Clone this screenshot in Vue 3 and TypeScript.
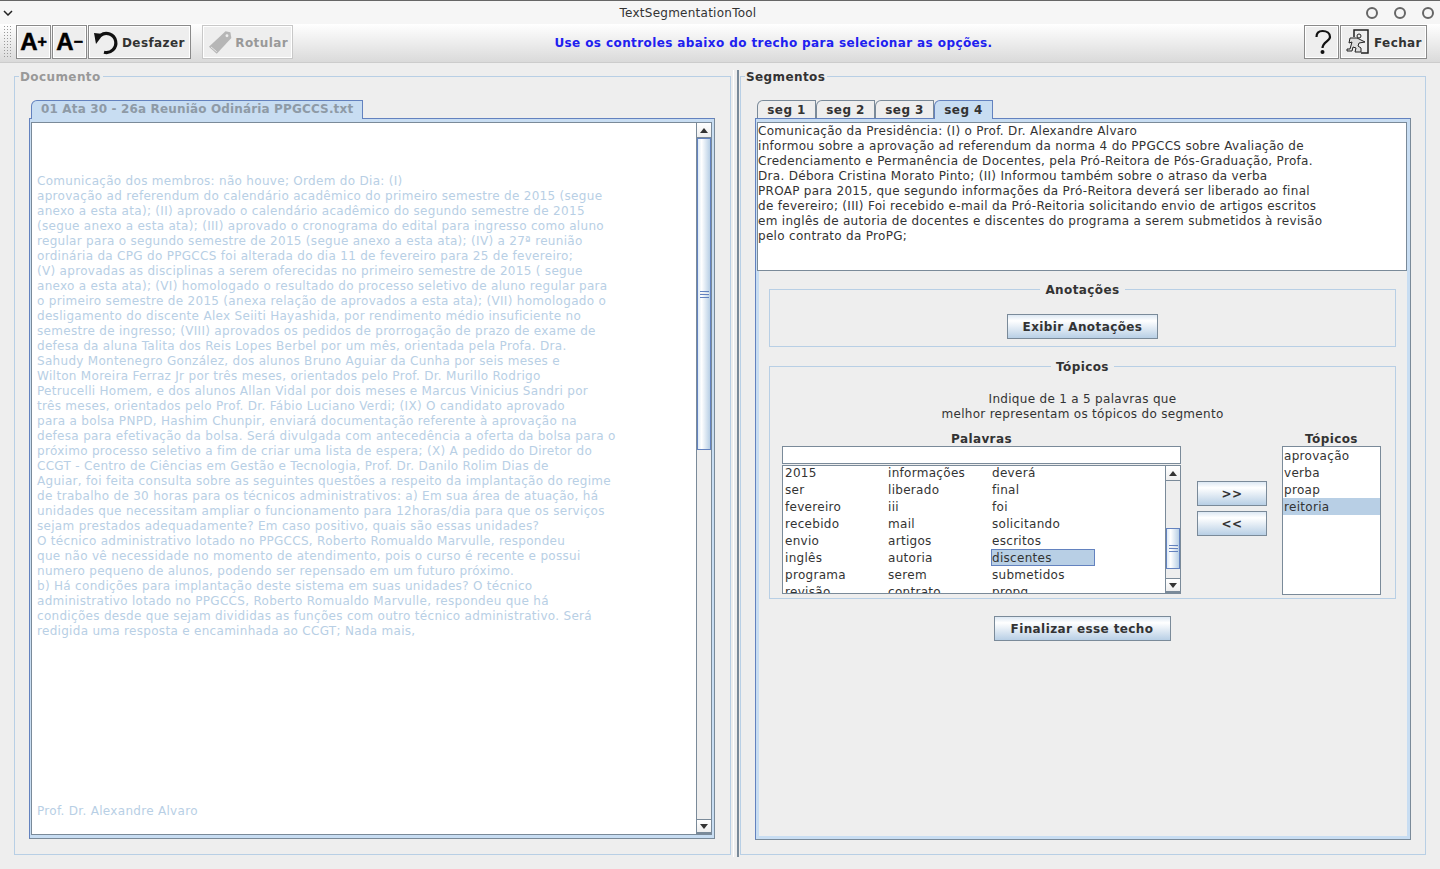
<script setup lang="ts">
const docLines: string[] = [
  "Comunicação dos membros: não houve; Ordem do Dia: (I)",
  "aprovação ad referendum do calendário acadêmico do primeiro semestre de 2015 (segue",
  "anexo a esta ata); (II) aprovado o calendário acadêmico do segundo semestre de 2015",
  "(segue anexo a esta ata); (III) aprovado o cronograma do edital para ingresso como aluno",
  "regular para o segundo semestre de 2015 (segue anexo a esta ata); (IV) a 27ª reunião",
  "ordinária da CPG do PPGCCS foi alterada do dia 11 de fevereiro para 25 de fevereiro;",
  "(V) aprovadas as disciplinas a serem oferecidas no primeiro semestre de 2015 ( segue",
  "anexo a esta ata); (VI) homologado o resultado do processo seletivo de aluno regular para",
  "o primeiro semestre de 2015 (anexa relação de aprovados a esta ata); (VII) homologado o",
  "desligamento do discente Alex Seiiti Hayashida, por rendimento médio insuficiente no",
  "semestre de ingresso; (VIII) aprovados os pedidos de prorrogação de prazo de exame de",
  "defesa da aluna Talita dos Reis Lopes Berbel por um mês, orientada pela Profa. Dra.",
  "Sahudy Montenegro González, dos alunos Bruno Aguiar da Cunha por seis meses e",
  "Wilton Moreira Ferraz Jr por três meses, orientados pelo Prof. Dr. Murillo Rodrigo",
  "Petrucelli Homem, e dos alunos Allan Vidal por dois meses e Marcus Vinicius Sandri por",
  "três meses, orientados pelo Prof. Dr. Fábio Luciano Verdi; (IX) O candidato aprovado",
  "para a bolsa PNPD, Hashim Chunpir, enviará documentação referente à aprovação na",
  "defesa para efetivação da bolsa. Será divulgada com antecedência a oferta da bolsa para o",
  "próximo processo seletivo a fim de criar uma lista de espera; (X) A pedido do Diretor do",
  "CCGT - Centro de Ciências em Gestão e Tecnologia, Prof. Dr. Danilo Rolim Dias de",
  "Aguiar, foi feita consulta sobre as seguintes questões a respeito da implantação do regime",
  "de trabalho de 30 horas para os técnicos administrativos: a) Em sua área de atuação, há",
  "unidades que necessitam ampliar o funcionamento para 12horas/dia para que os serviços",
  "sejam prestados adequadamente? Em caso positivo, quais são essas unidades?",
  "O técnico administrativo lotado no PPGCCS, Roberto Romualdo Marvulle, respondeu",
  "que não vê necessidade no momento de atendimento, pois o curso é recente e possui",
  "numero pequeno de alunos, podendo ser repensado em um futuro próximo.",
  "b) Há condições para implantação deste sistema em suas unidades? O técnico",
  "administrativo lotado no PPGCCS, Roberto Romualdo Marvulle, respondeu que há",
  "condições desde que sejam divididas as funções com outro técnico administrativo. Será",
  "redigida uma resposta e encaminhada ao CCGT; Nada mais,",
];

const segLines: string[] = [
  "Comunicação da Presidência: (I) o Prof. Dr. Alexandre Alvaro",
  "informou sobre a aprovação ad referendum da norma 4 do PPGCCS sobre Avaliação de",
  "Credenciamento e Permanência de Docentes, pela Pró-Reitora de Pós-Graduação, Profa.",
  "Dra. Débora Cristina Morato Pinto; (II) Informou também sobre o atraso da verba",
  "PROAP para 2015, que segundo informações da Pró-Reitora deverá ser liberado ao final",
  "de fevereiro; (III) Foi recebido e-mail da Pró-Reitoria solicitando envio de artigos escritos",
  "em inglês de autoria de docentes e discentes do programa a serem submetidos à revisão",
  "pelo contrato da ProPG;",
];

const tabs = ["seg 1", "seg 2", "seg 3", "seg 4"];

const words: string[] = [
  "2015", "informações", "deverá",
  "ser", "liberado", "final",
  "fevereiro", "iii", "foi",
  "recebido", "mail", "solicitando",
  "envio", "artigos", "escritos",
  "inglês", "autoria", "discentes",
  "programa", "serem", "submetidos",
  "revisão", "contrato", "propg",
];

const topics = ["aprovação", "verba", "proap", "reitoria"];
</script>

<template>
  <div class="app">
    <div class="titlebar">
      <svg class="chevron" width="10" height="6" viewBox="0 0 10 6">
        <path d="M1 1 L5 5 L9 1" fill="none" stroke="#222" stroke-width="1.5" />
      </svg>
      <span class="title">TextSegmentationTool</span>
      <div class="winbtns">
        <span class="winbtn"></span>
        <span class="winbtn"></span>
        <span class="winbtn"></span>
      </div>
    </div>

    <div class="toolbar">
      <div class="grip"></div>
      <button class="tool icon-only font-btn">A<small>+</small></button>
      <button class="tool icon-only font-btn">A<small>−</small></button>
      <button class="tool undo">
        <svg width="27" height="28" viewBox="0 0 27 28">
          <path d="M7.5 7.5 A9.5 9.5 0 1 1 11 24.2" fill="none" stroke="#111" stroke-width="3.2" />
          <path d="M1 5 L3 16 L10.5 6 Z" fill="#111" />
        </svg>
        <span>Desfazer</span>
      </button>
      <button class="tool disabled">
        <svg width="27" height="26" viewBox="0 0 27 26">
          <path d="M19 2 L24 3 L25 9 L10 25 L2 18 Z" fill="#b6b6b6" />
          <path d="M4 18 L10 23" stroke="#e8e8e8" stroke-width="1" />
          <circle cx="20.5" cy="6.5" r="1.5" fill="#eee" />
        </svg>
        <span>Rotular</span>
      </button>
      <div class="hint">Use os controles abaixo do trecho para selecionar as opções.</div>
      <button class="tool icon-only help">
        <svg width="20" height="28" viewBox="0 0 20 28">
          <path d="M4.5 9 C4.5 4 8 3 10.5 3 C15 3 18 5.5 18 9 C18 13 10.5 14 10.5 20" fill="none" stroke="#111" stroke-width="2.2" />
          <circle cx="10.5" cy="24" r="2" fill="#111" />
        </svg>
      </button>
      <button class="tool exit">
        <svg width="26" height="26" viewBox="0 0 26 26">
          <path d="M9 8 V1 H23 V24 H16" fill="none" stroke="#222" stroke-width="1.5" />
          <circle cx="14" cy="7" r="2" fill="#eee" stroke="#222" />
          <path d="M5 9 H12 L16 11 L20 13 L14 14 L13 17 L16 19 L16 23 L10 23 L11 19 L8 18 L7 22 L2 22 L2 20 L5 20 L7 13 L4 14 Z" fill="#ddd" stroke="#222" stroke-width="1" />
        </svg>
        <span>Fechar</span>
      </button>
    </div>

    <div class="main">
      <fieldset class="group doc-group">
        <legend class="muted-legend">Documento</legend>
        <div class="tabrow">
          <div class="tab active muted-tab">01 Ata 30 - 26a Reunião Odinária PPGCCS.txt</div>
        </div>
        <div class="tabpane doc-pane">
          <div class="doc-inner">
            <div class="doc-text">
              <div v-for="line in docLines" :key="line" class="doc-line">{{ line }}</div>
              <div class="doc-sign">Prof. Dr. Alexandre Alvaro</div>
            </div>
            <div class="scrollbar">
              <div class="sb-btn"><span class="arrow-up"></span></div>
              <div class="thumb doc-thumb"><span class="thumb-grip"></span></div>
              <div class="sb-track"></div>
              <div class="sb-btn down"><span class="arrow-down"></span></div>
            </div>
          </div>
        </div>
      </fieldset>

      <div class="splitter"></div>

      <fieldset class="group seg-group">
        <legend class="seg-legend">Segmentos</legend>
        <div class="tabrow">
          <div v-for="(t, i) in tabs" :key="t" class="tab seg-tab" :class="{ active: i === 3 }">{{ t }}</div>
        </div>
        <div class="tabpane seg-pane">
          <div class="seg-text">
            <div v-for="line in segLines" :key="line">{{ line }}</div>
          </div>

          <fieldset class="subgroup notes">
            <legend>Anotações</legend>
            <button class="metal notes-btn">Exibir Anotações</button>
          </fieldset>

          <fieldset class="subgroup topics">
            <legend>Tópicos</legend>
            <p class="topics-hint">Indique de 1 a 5 palavras que<br />melhor representam os tópicos do segmento</p>
            <div class="picker">
              <div class="words-col">
                <div class="col-label">Palavras</div>
                <div class="filter"></div>
                <div class="words-list">
                  <div class="words-grid">
                    <div v-for="w in words" :key="w" class="word" :class="{ picked: w === 'discentes' }">{{ w }}</div>
                  </div>
                  <div class="scrollbar small">
                    <div class="sb-btn"><span class="arrow-up"></span></div>
                    <div class="sb-gap"></div>
                    <div class="thumb list-thumb"><span class="thumb-grip"></span></div>
                    <div class="sb-track"></div>
                    <div class="sb-btn down"><span class="arrow-down"></span></div>
                  </div>
                </div>
              </div>
              <div class="move-btns">
                <button class="metal move">&gt;&gt;</button>
                <button class="metal move">&lt;&lt;</button>
              </div>
              <div class="topics-col">
                <div class="col-label">Tópicos</div>
                <div class="topics-list">
                  <div v-for="t in topics" :key="t" class="topic" :class="{ picked: t === 'reitoria' }">{{ t }}</div>
                </div>
              </div>
            </div>
          </fieldset>

          <button class="metal finish">Finalizar esse techo</button>
        </div>
      </fieldset>
    </div>
  </div>
</template>

<style>
html,
body {
  margin: 0;
  background: #eeeeee;
}
</style>

<style scoped>
.app {
  width: 1440px;
  height: 869px;
  overflow: hidden;
  background: #eeeeee;
  color: #333333;
  font-family: "DejaVu Sans", sans-serif;
  font-size: 12px;
  letter-spacing: 0.3px;
  display: flex;
  flex-direction: column;
}

.titlebar {
  height: 23px;
  border-top: 1px solid #666666;
  background: #f6f6f6;
  display: flex;
  align-items: center;
  position: relative;
  flex: none;
}

.chevron {
  margin-left: 3px;
}

.title {
  position: absolute;
  left: 0;
  width: 1376px;
  text-align: center;
  font-size: 12px;
  letter-spacing: 0.25px;
  color: #333333;
}

.winbtns {
  margin-left: auto;
  display: flex;
  gap: 16px;
  margin-right: 6px;
}

.winbtn {
  width: 8px;
  height: 8px;
  border: 2px solid #666666;
  border-radius: 50%;
}

.toolbar {
  height: 37px;
  flex: none;
  display: flex;
  align-items: flex-start;
  border-bottom: 1px solid #cccccc;
  background: linear-gradient(#ffffff, #dadada);
  padding: 1px 13px 0 3px;
  gap: 1px;
  box-sizing: content-box;
}

.grip {
  width: 9px;
  height: 34px;
  margin-right: 3px;
  background-image: radial-gradient(#9a9a9a 0.7px, transparent 0.8px);
  background-size: 3px 3px;
}

.tool {
  height: 34px;
  margin: 0;
  padding: 0 4px;
  box-sizing: border-box;
  border: 1px solid #8a8a8a;
  outline: 1px solid #ffffff;
  outline-offset: -2px;
  background: #eeeeee;
  color: #333333;
  display: flex;
  align-items: center;
  gap: 2px;
  font-family: inherit;
  font-size: 12px;
  font-weight: bold;
  letter-spacing: 0.4px;
}

.tool span {
  padding-top: 2px;
}

.icon-only {
  width: 35px;
  justify-content: center;
  padding: 0;
}

.font-btn {
  font-family: "Liberation Sans", sans-serif;
  font-size: 24px;
  color: #000000;
  letter-spacing: 0;
  gap: 0;
  -webkit-text-stroke: 0.5px #000000;
}

.font-btn small {
  font-size: 16px;
  font-weight: bold;
}

.undo {
  width: 103px;
}

.disabled {
  width: 91px;
  margin-left: 10px;
  color: #999999;
  border-color: #c8c8c8;
}

.hint {
  flex: 1;
  align-self: center;
  padding: 0 50px 2px 0;
  text-align: center;
  color: #2020f0;
  font-weight: bold;
  letter-spacing: 0.4px;
}

.exit {
  width: 87px;
  gap: 3px;
}

.main {
  flex: 1;
  min-height: 0;
  display: flex;
  padding: 6px 14px 14px;
}

.group {
  margin: 0;
  padding: 0;
  border: 1px solid #b8cfe5;
  min-width: 0;
  display: flex;
  flex-direction: column;
  box-sizing: border-box;
}

.group legend {
  margin-left: -10px;
  padding: 0 2px 0 1px;
  height: 15px;
  font-weight: bold;
  line-height: 17px;
  letter-spacing: 0.4px;
}

.muted-legend {
  color: #999999;
}

.seg-legend {
  color: #333333;
}

.doc-group {
  width: 717px;
  padding: 16px 15px 15px 14px;
}

.seg-group {
  width: 686px;
  padding: 16px 14px 14px 14px;
}

.splitter {
  width: 9px;
  flex: none;
  margin-top: 1px;
  margin-bottom: -2px;
  background: linear-gradient(
    90deg,
    #eeeeee 2px,
    #ffffff 2px,
    #ffffff 3px,
    #eeeeee 3px,
    #eeeeee 6px,
    #7a8a99 6px,
    #7a8a99 8px,
    #eeeeee 8px
  );
}

.tabrow {
  display: flex;
  height: 19px;
  padding-left: 2px;
  flex: none;
  position: relative;
  z-index: 1;
  margin-bottom: -1px;
}

.tab {
  height: 18px;
  box-sizing: border-box;
  padding: 0 9px;
  border: 1px solid #7a8a99;
  border-bottom: 0;
  border-radius: 6px 0 0 0;
  font-weight: bold;
  line-height: 18px;
  letter-spacing: 0.4px;
  background: #eeeeee;
}

.tab.active {
  background: #c8ddf2;
  border-color: #6382bf;
  height: 19px;
}

.seg-tab {
  width: 59px;
  padding: 0;
  text-align: center;
}

.muted-tab {
  color: #8e9aa6;
  letter-spacing: 0.15px;
  line-height: 17px;
}

.tabpane {
  flex: 1;
  min-height: 0;
  box-sizing: border-box;
  border: 1px solid #6382bf;
  border-bottom-color: #7a8a99;
  border-right-color: #7a8a99;
  padding: 3px;
  background: #c8ddf2;
  position: relative;
}

.doc-pane {
  padding: 3px 2px 3px 1px;
}

.doc-inner {
  height: 100%;
  box-sizing: border-box;
  border: 1px solid #7a8a99;
  display: flex;
  background: #ffffff;
}

.doc-text {
  flex: 1;
  padding: 51px 0 0 5px;
  color: #b8cfe5;
  line-height: 15px;
  white-space: nowrap;
  overflow: hidden;
}

.doc-sign {
  margin-top: 165px;
}

.scrollbar {
  width: 15px;
  flex: none;
  box-sizing: border-box;
  border-left: 1px solid #7a8a99;
  background: #eeeeee;
  display: flex;
  flex-direction: column;
}

.sb-btn {
  height: 15px;
  flex: none;
  box-sizing: border-box;
  border-bottom: 1px solid #7a8a99;
  background: linear-gradient(#ffffff, #eeeeee);
  display: flex;
  align-items: center;
  justify-content: center;
}

.sb-btn.down {
  border-bottom: 2px solid #7a8a99;
  border-top: 1px solid #7a8a99;
}

.arrow-up {
  width: 0;
  height: 0;
  border: 4px solid transparent;
  border-top: 0;
  border-bottom: 5px solid #333333;
}

.arrow-down {
  width: 0;
  height: 0;
  border: 4px solid transparent;
  border-bottom: 0;
  border-top: 5px solid #333333;
}

.thumb {
  flex: none;
  box-sizing: border-box;
  border: 1px solid #6382bf;
  background: linear-gradient(90deg, #ddeaf5, #ffffff 30%, #b8cfe5);
  display: flex;
  align-items: center;
  justify-content: center;
}

.doc-thumb {
  height: 312px;
}

.list-thumb {
  height: 41px;
}

.thumb-grip {
  width: 9px;
  height: 5px;
  border-top: 1px solid #6382bf;
  border-bottom: 1px solid #6382bf;
  background: linear-gradient(#eeeeee 1px, #6382bf 1px, #6382bf 2px, transparent 2px) 0 1px / 9px 3px no-repeat;
}

.sb-track {
  flex: 1;
  background: #eeeeee;
}

.sb-gap {
  height: 47px;
  flex: none;
}

.seg-pane {
  display: flex;
  flex-direction: column;
  align-items: center;
  background: #eeeeee;
  box-shadow: inset 0 3px 0 #c8ddf2, inset 3px 0 0 #c8ddf2, inset -3px 0 0 #c8ddf2, inset 0 -3px 0 #c8ddf2;
}

.seg-text {
  align-self: stretch;
  margin-left: -2px;
  height: 149px;
  flex: none;
  box-sizing: border-box;
  border: 1px solid #7a8a99;
  background: #ffffff;
  padding: 1px 0 0 0;
  line-height: 15px;
  white-space: nowrap;
}

.subgroup {
  align-self: stretch;
  margin: 11px 11px 0 10px;
  padding: 0;
  border: 1px solid #b8cfe5;
  min-width: 0;
  box-sizing: border-box;
  display: flex;
  flex-direction: column;
  align-items: center;
}

.subgroup legend {
  margin: 0 auto;
  padding: 0 5px;
  height: 15px;
  font-weight: bold;
  line-height: 17px;
  letter-spacing: 0.4px;
}

.notes {
  height: 65px;
}

.metal {
  margin: 0;
  padding: 0;
  box-sizing: border-box;
  border: 1px solid #7a8a99;
  background: linear-gradient(#dde8f3 0%, #ffffff 25%, #b8cfe5 100%);
  color: #333333;
  font-family: inherit;
  font-size: 12px;
  font-weight: bold;
  letter-spacing: 0.4px;
}

.notes-btn {
  width: 151px;
  height: 25px;
  margin-top: 17px;
}

.topics {
  height: 240px;
  margin-top: 12px;
}

.topics-hint {
  margin: 18px 0 0;
  text-align: center;
  line-height: 15px;
}

.picker {
  align-self: stretch;
  display: flex;
  padding: 0 0 0 12px;
  margin-top: 9px;
}

.col-label {
  height: 13px;
  text-align: center;
  font-weight: bold;
  line-height: 17px;
  letter-spacing: 0.4px;
}

.words-col {
  width: 399px;
}

.filter {
  height: 18px;
  box-sizing: border-box;
  border: 1px solid #7a8a99;
  background: #ffffff;
  margin-top: 2px;
}

.words-list {
  height: 129px;
  margin-top: 1px;
  box-sizing: border-box;
  border: 1px solid #7a8a99;
  background: #ffffff;
  display: flex;
  overflow: hidden;
}

.words-grid {
  flex: 1;
  margin-top: -2px;
  display: grid;
  grid-template-columns: repeat(3, 104px);
  grid-auto-rows: 17px;
  align-content: start;
  overflow: hidden;
}

.word {
  line-height: 17px;
  padding: 0;
  box-sizing: border-box;
  border: 1px solid transparent;
}

.word:nth-child(3n + 1) {
  padding-left: 1px;
}

.word.picked {
  background: #b8cfe5;
  border-color: #6382bf;
}

.move-btns {
  display: flex;
  flex-direction: column;
  gap: 5px;
  margin: 50px 15px 0 16px;
}

.move {
  width: 70px;
  height: 25px;
}

.topics-col {
  width: 99px;
}

.topics-list {
  height: 149px;
  margin-top: 2px;
  box-sizing: border-box;
  border: 1px solid #7a8a99;
  background: #ffffff;
}

.topic {
  height: 17px;
  line-height: 19px;
  padding-left: 1px;
}

.topic.picked {
  background: #b8cfe5;
}

.finish {
  width: 177px;
  height: 25px;
  margin: 17px 2px 0 0;
}
</style>
